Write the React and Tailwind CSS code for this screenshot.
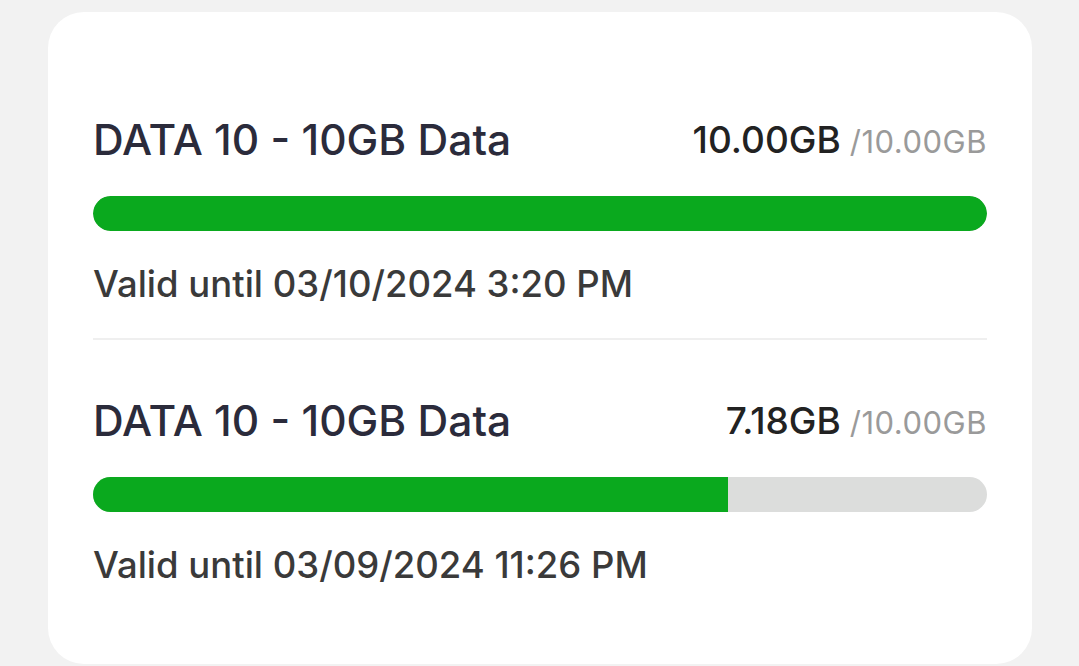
const PLANS = [
  { name: 'DATA 10 - 10GB Data', used: '10.00GB', total: '10.00GB', pct: 100, valid: '03/10/2024 3:20 PM' },
  { name: 'DATA 10 - 10GB Data', used: '7.18GB', total: '10.00GB', pct: 71, valid: '03/09/2024 11:26 PM' },
];

function PlanRow({ plan, last }) {
  return (
    <div className={`pt-[53px] pb-[30px] ${last ? '' : 'border-b-2 border-[#efefef]'}`}>
      <div className="flex h-[56px] items-center justify-between">
        <h2 className="text-[42.5px] font-medium text-[#2b2b3b]">{plan.name}</h2>
        <div className="flex items-baseline">
          <span className="text-[37px] font-medium text-[#222]">{plan.used}</span>
          <span className="ml-[9px] text-[31px] tracking-[0.5px] text-[#9a9a9a]">/{plan.total}</span>
        </div>
      </div>
      <div className="mt-[28px] h-[35px] overflow-hidden rounded-full bg-[#dcdddc]">
        <div className={`h-full bg-[#0aa91e] ${plan.pct >= 100 ? 'rounded-full' : ''}`} style={{ width: `${plan.pct}%` }} />
      </div>
      <div className="mt-[29px] flex h-[48px] items-center text-[36.5px] font-medium text-[#3a3a3a]">Valid until {plan.valid}</div>
    </div>
  );
}

export default function App() {
  return (
    <div className="min-h-[666px] bg-[#f2f2f2] pt-[12px] pl-[48px] font-['Inter',sans-serif]">
      <div className="w-[984px] rounded-[36px] bg-white px-[45px] pt-[47px] pb-[45px]">
        {PLANS.map((plan, i) => (
          <PlanRow key={i} plan={plan} last={i === PLANS.length - 1} />
        ))}
      </div>
    </div>
  );
}
